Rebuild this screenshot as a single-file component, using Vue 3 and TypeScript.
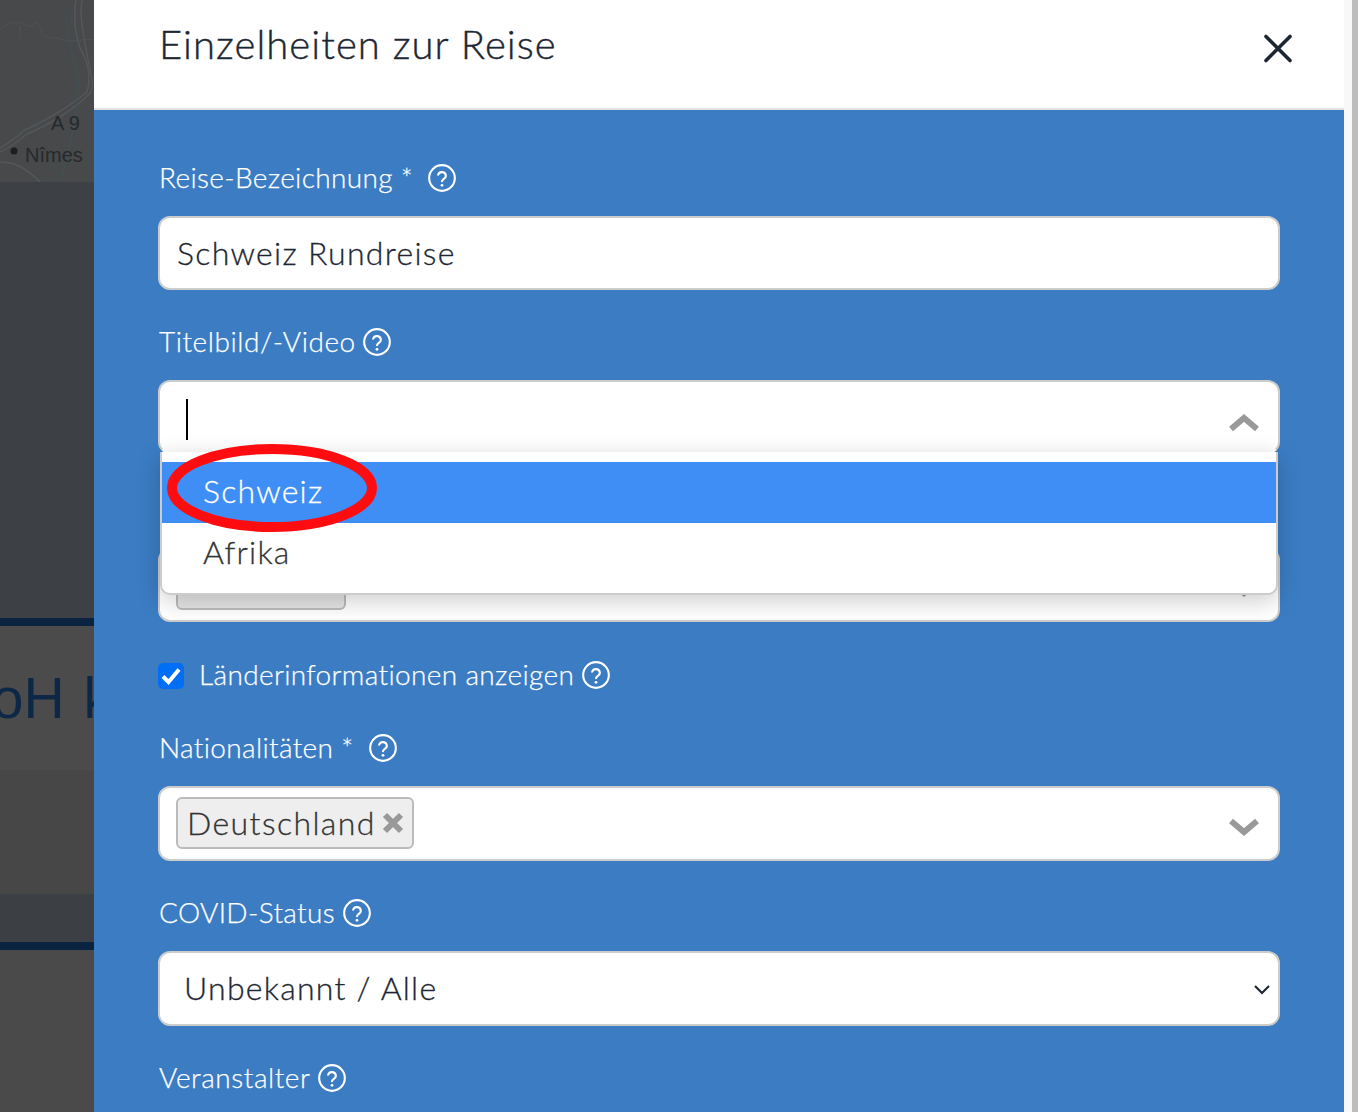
<script setup lang="ts">
const helpPath = 'M8.700 9.200a3.400 3.400 0 0 1 6.600 1c0 2.300-3.300 2.600-3.300 4.600';
</script>

<template>
  <div class="page">
    <aside class="backdrop" aria-hidden="true">
      <svg class="map" width="94" height="182" viewBox="0 0 94 182">
        <rect width="94" height="182" fill="#47494a" />
        <g fill="none" stroke="#505355" stroke-width="1">
          <path d="M0 30c10-8 14-8 20-7s8 6 14 1 6 9 11 12 14 1 20 4 20-2 29 0" />
          <path d="M20 26c-1 6 1 9 0 12" />
        </g>
        <g fill="none" stroke="#54575a" stroke-width="1.500">
          <path d="M82 0c-3 18 2 36 6 60 3 14 6 22 3 32-12 14-40 32-64 42-8 6-14 12-27 18" />
          <path d="M76 0c-3 18 0 36 4 48 6 10 12 26 7 44-14 12-40 28-62 38-8 6-14 12-25 18" />
          <path d="M0 162c14 0 24 4 40 20" />
        </g>
        <path d="M67 10c-2 20 4 40 10 60 4 14-2 60-16 110" fill="none" stroke="#3f5358" stroke-width="1" />
        <text x="51" y="130" class="map-label">A 9</text>
        <circle cx="14" cy="151" r="3.500" fill="#1c1e20" />
        <text x="25" y="162" class="map-label">Nîmes</text>
      </svg>
      <div class="band dark" />
      <div class="band rule" />
      <div class="band mid title-band"><span>oH k</span></div>
      <div class="band mid2" />
      <div class="band dark2" />
      <div class="band rule" />
      <div class="band rest" />
    </aside>

    <main class="modal">
      <header class="head">
        <h1>Einzelheiten zur Reise</h1>
        <svg class="close" width="30" height="30" viewBox="0 0 30 30" aria-label="Schließen">
          <path d="M3 3.500 27 27.500M27 3.500 3 27.500" stroke="#1d2733" stroke-width="3.600" stroke-linecap="round" />
        </svg>
      </header>

      <section class="body">
        <div class="label first">
          <span>Reise-Bezeichnung *</span>
          <svg class="help wide" viewBox="0 0 24 24"><circle cx="12" cy="12" r="11" /><path :d="helpPath" /><circle class="dot" cx="12" cy="18.300" r="1.200" /></svg>
        </div>
        <div class="field"><span class="value">Schweiz Rundreise</span></div>

        <div class="label second">
          <span class="loose">Titelbild/-Video</span>
          <svg class="help tight" viewBox="0 0 24 24"><circle cx="12" cy="12" r="11" /><path :d="helpPath" /><circle class="dot" cx="12" cy="18.300" r="1.200" /></svg>
        </div>
        <div class="select-wrap">
          <div class="field open">
            <span class="caret" />
            <svg class="chev" width="30" height="20" viewBox="0 0 30 20"><path d="M2 15 15 4l13 11" /></svg>
          </div>
          <ul class="menu">
            <li class="active">Schweiz</li>
            <li>Afrika</li>
          </ul>
          <svg class="ring" width="214" height="92" viewBox="0 0 214 92">
            <ellipse cx="106" cy="46" rx="100" ry="39" />
          </svg>
        </div>

        <div class="field hidden-field">
          <span class="hidden-tag" />
          <svg class="chev down" width="30" height="20" viewBox="0 0 30 20"><path d="M2 5l13 11L28 5" /></svg>
        </div>

        <div class="check-row">
          <span class="check">
            <svg width="20" height="18" viewBox="0 0 20 18"><path d="M2 9.500 7.500 15 18 2.500" /></svg>
          </span>
          <span class="text">Länderinformationen anzeigen</span>
          <svg class="help" viewBox="0 0 24 24"><circle cx="12" cy="12" r="11" /><path :d="helpPath" /><circle class="dot" cx="12" cy="18.300" r="1.200" /></svg>
        </div>

        <div class="label after-check">
          <span>Nationalitäten *</span>
          <svg class="help wide" viewBox="0 0 24 24"><circle cx="12" cy="12" r="11" /><path :d="helpPath" /><circle class="dot" cx="12" cy="18.300" r="1.200" /></svg>
        </div>
        <div class="field tall">
          <span class="tag">Deutschland<svg width="22" height="22" viewBox="0 0 22 22"><path d="M3 3 19 19M19 3 3 19" /></svg></span>
          <svg class="chev down" width="30" height="20" viewBox="0 0 30 20"><path d="M2 5l13 11L28 5" /></svg>
        </div>

        <div class="label after-tall">
          <span>COVID-Status</span>
          <svg class="help" viewBox="0 0 24 24"><circle cx="12" cy="12" r="11" /><path :d="helpPath" /><circle class="dot" cx="12" cy="18.300" r="1.200" /></svg>
        </div>
        <div class="field tall">
          <span class="value native">Unbekannt / Alle</span>
          <svg class="mini" width="18" height="12" viewBox="0 0 18 12"><path d="M2 3l7 7 7-7" /></svg>
        </div>

        <div class="label after-tall">
          <span class="loose">Veranstalter</span>
          <svg class="help" viewBox="0 0 24 24"><circle cx="12" cy="12" r="11" /><path :d="helpPath" /><circle class="dot" cx="12" cy="18.300" r="1.200" /></svg>
        </div>
      </section>
    </main>

    <div class="scroll"><div class="thumb" /></div>
  </div>
</template>

<style>
html, body { margin: 0; height: 100%; overflow: hidden; }
</style>

<style scoped>
.page { display: flex; width: 1358px; height: 1112px; overflow: hidden; font-family: Lato, "Liberation Sans", sans-serif; font-weight: 300; color: #1d2733; }
.backdrop { width: 94px; flex: none; display: flex; flex-direction: column; overflow: hidden; }
.map { display: block; flex: none; }
.map-label { font: 20px "Liberation Sans", sans-serif; fill: #26292c; }
.band { flex: none; }
.dark { height: 436px; background: #3d4044; }
.rule { height: 8px; background: #0a2340; }
.mid { height: 144px; background: #4b4b4b; }
.title-band { display: flex; align-items: center; justify-content: flex-end; overflow: hidden; }
.title-band span { font: 57px/1 "Liberation Sans", sans-serif; color: #0c2846; white-space: nowrap; word-spacing: 3px; margin-right: -18px; }
.mid2 { height: 124px; background: #474747; }
.dark2 { height: 48px; background: #3c4044; }
.rest { flex: 1; background: #4a4a4a; }

.modal { width: 1250px; flex: none; display: flex; flex-direction: column; }
.head { height: 108px; flex: none; background: #fff; border-bottom: 2px solid #e2e2e2; display: flex; align-items: flex-start; justify-content: space-between; padding: 0 51px 0 65px; }
.head h1 { margin: 20px 0 0; font-size: 40px; line-height: 48px; font-weight: 300; letter-spacing: 1.050px; -webkit-text-stroke: 0.4px #1d2733; }
.close { margin-top: 33px; }
.body { flex: 1; background: #3b7cc3; padding: 50px 64px 0; overflow: hidden; }
.label { display: flex; align-items: center; height: 36px; margin: 35px 0 20px 1px; color: #fff; font-size: 28px; letter-spacing: 0.350px; -webkit-text-stroke: 0.25px #fff; }
.label span, .text { margin-top: -2px; }
.loose { letter-spacing: 0.550px; }
.first { margin-top: 0; }
.second { margin-top: 34px; }
.after-check { margin-top: 37px; }
.after-tall { margin-top: 34px; }
.help { width: 28px; height: 28px; flex: none; margin-left: 8px; fill: none; stroke: #fff; stroke-width: 1.800; stroke-linecap: round; }
.help.wide { margin-left: 15px; }
.help.tight { margin-left: 7px; }
.help .dot { fill: #fff; stroke: none; }
.field { height: 74px; box-sizing: border-box; background: #fff; border: 2px solid #ccc; border-radius: 12px; display: flex; align-items: center; justify-content: space-between; padding: 0 19px 0 16px; position: relative; }
.tall { height: 75px; }
.value { font-size: 32px; letter-spacing: 1.300px; color: #1d2733; margin: -2px 0 0 1px; -webkit-text-stroke: 0.3px #1d2733; }
.native { margin-left: 8px; letter-spacing: 1.250px; }
.select-wrap { position: relative; z-index: 1; }
.open { border-bottom-color: transparent; }
.caret { width: 2px; height: 41px; background: #000; margin: 4px 0 0 10px; }
.chev { fill: none; stroke: #999; stroke-width: 6; }
.open .chev { margin-top: 14px; }
.chev.down { margin-top: 4px; }
.menu { position: absolute; left: 2px; right: 2px; top: 72px; height: 143px; box-sizing: border-box; margin: 0; padding: 10px 0 0; list-style: none; background: #fff; border: 2px solid #ccc; border-top: 0; border-radius: 0 0 10px 10px; box-shadow: 0 6px 24px rgba(0, 0, 0, .2); color: #333; font-size: 32px; letter-spacing: 1.200px; -webkit-text-stroke: 0.3px #333; }
.menu li { height: 61px; line-height: 58px; padding-left: 41px; }
.menu .active { background: #3f8ef5; color: #fff; -webkit-text-stroke: 0.3px #fff; }
.ring { position: absolute; left: 8px; top: 62px; fill: none; stroke: #ff0c10; stroke-width: 10; }
.hidden-field { margin-top: 94px; }
.hidden-tag { width: 170px; height: 26px; box-sizing: border-box; background: #e6e6e6; border: 2px solid #bbb; border-radius: 6px; align-self: flex-end; margin-bottom: 10px; }
.check-row { display: flex; align-items: center; height: 36px; margin-top: 35px; color: #fff; font-size: 28px; letter-spacing: 0.350px; -webkit-text-stroke: 0.25px #fff; }
.check { width: 26px; height: 26px; flex: none; background: #006ff5; border-radius: 5px; display: flex; align-items: center; justify-content: center; margin-right: 15px; margin-top: 2px; }
.check svg { fill: none; stroke: #fff; stroke-width: 4; }
.tag { display: inline-flex; align-items: center; height: 52px; box-sizing: border-box; padding: 0 8px 0 9px; margin-top: -2px; background: #eee; border: 2px solid #bbb; border-radius: 6px; color: #333; font-size: 32px; letter-spacing: 1.400px; -webkit-text-stroke: 0.3px #333; }
.tag svg { fill: none; stroke: #999; stroke-width: 6; margin-left: 6px; }
.mini { fill: none; stroke: #1d2733; stroke-width: 2.200; margin-right: -12px; }
.scroll { flex: 1; background: #f8f8f8; display: flex; justify-content: flex-end; }
.thumb { width: 6px; height: 100%; background: #bdbdbd; }
</style>
